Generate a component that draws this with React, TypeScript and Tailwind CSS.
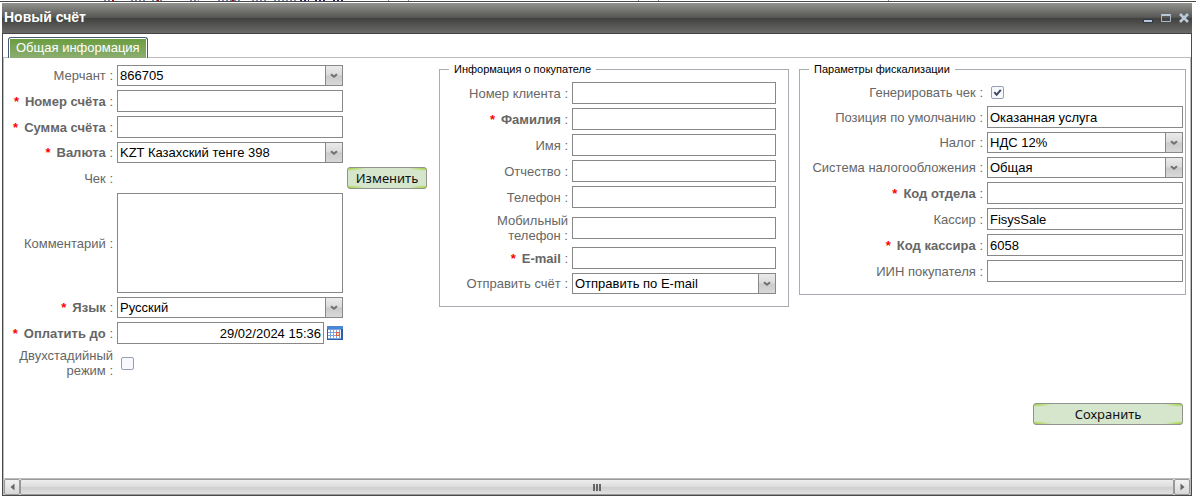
import type { ComponentPropsWithoutRef, ReactNode } from "react";

function Row({
  id,
  label,
  required,
  labelClass = "w-[109px]",
  className = "",
  children,
}: {
  id: string;
  label: string;
  required?: boolean;
  labelClass?: string;
  className?: string;
  children?: ReactNode;
}) {
  return (
    <div className={`flex items-center gap-1 ${className}`}>
      <label
        htmlFor={id}
        className={`shrink-0 text-right leading-[15px] text-[#666] ${labelClass}`}
      >
        {required ? (
          <>
            <span className="mr-1.5 font-bold text-[#f00]">*</span>
            <span className="font-bold">{label}</span> :
          </>
        ) : (
          `${label} :`
        )}
      </label>
      {children}
    </div>
  );
}

function TextField({
  className = "",
  ...props
}: ComponentPropsWithoutRef<"input">) {
  return (
    <input
      type="text"
      className={`h-[22px] min-w-0 flex-1 border border-[#888] bg-white px-0.5 text-black outline-none ${className}`}
      {...props}
    />
  );
}

function SelectField({ id, options }: { id: string; options: string[] }) {
  return (
    <div className="relative h-[21px] min-w-0 flex-1">
      <select
        id={id}
        className="block h-full w-full appearance-none border border-[#888] bg-white pr-5 pl-0.5 text-black outline-none"
      >
        {options.map((option) => (
          <option key={option}>{option}</option>
        ))}
      </select>
      <span className="pointer-events-none absolute inset-y-0 right-0 flex w-[18px] items-center justify-center border border-[#888] bg-[linear-gradient(#ebebeb,#dadada_48%,#cacaca_52%,#d8d8d8)]">
        <svg width="8" height="6" viewBox="0 0 8 6" fill="none">
          <path d="M1 1.2 4 3.8 7 1.2" stroke="#707070" strokeWidth="2" />
        </svg>
      </span>
    </div>
  );
}

function Checkbox({ id, checked }: { id: string; checked?: boolean }) {
  return (
    <span className="relative ml-1 flex size-[13px]">
      <input
        id={id}
        type="checkbox"
        defaultChecked={checked}
        className="peer size-[13px] appearance-none rounded-[2px] border border-[#95a0b4] bg-[#f8f9fd]"
      />
      <svg
        viewBox="0 0 13 13"
        fill="none"
        className="pointer-events-none absolute inset-0 hidden size-[13px] peer-checked:block"
      >
        <path d="M3.3 6.2 5.6 8.8 9.8 3.8" stroke="#3a4760" strokeWidth="2" />
      </svg>
    </span>
  );
}

function GreenButton({
  className = "",
  children,
  ...props
}: ComponentPropsWithoutRef<"button">) {
  return (
    <button
      type="button"
      className={`h-[22px] rounded-[3px] border border-[#8f948c] bg-[#d5e6cd] bg-[radial-gradient(18px_3px_at_0_0,#9fd02e,transparent),radial-gradient(18px_3px_at_100%_0,#9fd02e,transparent),radial-gradient(18px_3px_at_0_100%,#9fd02e,transparent),radial-gradient(18px_3px_at_100%_100%,#9fd02e,transparent)] font-['Noto_Sans',sans-serif] text-[13px] leading-5 text-[#111] ${className}`}
      {...props}
    >
      {children}
    </button>
  );
}

function Group({ title, children }: { title: string; children: ReactNode }) {
  return (
    <fieldset className="min-w-0 self-start border border-[#a9abb3] pt-1.5 pb-3">
      <legend className="ml-[9px] px-[5px] text-[11px] leading-[14px] text-black">
        {title}
      </legend>
      <div className="flex flex-col gap-1">{children}</div>
    </fieldset>
  );
}

function CalendarIcon() {
  return (
    <svg width="16" height="14" viewBox="0 0 16 14" shapeRendering="crispEdges">
      <rect width="16" height="14" fill="#2c5fa8" />
      <rect width="16" height="3" fill="#4a86d4" />
      <rect x="1" y="3" width="13" height="10" fill="#7fa6dc" />
      {[4, 7, 10].map((y) =>
        [1, 4, 7, 10].map((x) => (
          <rect key={`${x}-${y}`} x={x} y={y} width="2" height="2" fill="#fff" />
        )),
      )}
      <rect x="13" y="4" width="1" height="8" fill="#e8f0fa" />
      <rect x="9" y="6" width="4" height="4" fill="#e2603f" />
      <rect x="10" y="7" width="2" height="2" fill="#fbd9cc" />
    </svg>
  );
}

function TitleBar() {
  return (
    <header className="flex h-[31px] items-center justify-between border-b border-[#444] bg-[linear-gradient(#92938f,#575755_48%,#41413f_52%,#6a6a68)] pr-[3px] pl-0.5">
      <h1 className="pb-0.5 text-sm font-bold text-white">Новый счёт</h1>
      <div className="flex gap-2">
        <button type="button" aria-label="Свернуть">
          <svg width="10" height="10" viewBox="0 0 10 10" className="block">
            <path d="M0 8h10" stroke="#2d3a4a" strokeWidth="4" />
            <path d="M1 8h8" stroke="#b9c8d8" strokeWidth="2" />
          </svg>
        </button>
        <button type="button" aria-label="Развернуть">
          <svg width="10" height="10" viewBox="0 0 10 10" className="block">
            <path d="M0 2h10" stroke="#b9c8d8" strokeWidth="2" />
            <path d="M.5 1v7.5h9V1" fill="none" stroke="#a9b9cb" />
          </svg>
        </button>
        <button type="button" aria-label="Закрыть">
          <svg width="10" height="10" viewBox="0 0 10 10" className="block">
            <path d="m1 1 8 8M9 1 1 9" stroke="#bccbdb" strokeWidth="2.6" />
          </svg>
        </button>
      </div>
    </header>
  );
}

function ScrollBar() {
  const arrow =
    "flex w-4 items-center justify-center rounded-[2px] border border-[#999] bg-linear-to-b from-[#f2f2f2] to-[#d8d8d8]";
  return (
    <div className="flex h-[17px] border-t border-[#bbb] bg-[#ddd]">
      <button type="button" aria-label="Влево" className={arrow}>
        <svg width="5" height="8" viewBox="0 0 5 8">
          <path d="M4.5.5v7L.5 4z" fill="#666" />
        </svg>
      </button>
      <div className="flex flex-1 items-center justify-center gap-px rounded-[2px] border border-[#999] bg-[linear-gradient(#eee,#ddd_48%,#cfcfcf_52%,#e0e0e0)]">
        <span className="h-[7px] w-0.5 bg-[#666]" />
        <span className="h-[7px] w-0.5 bg-[#666]" />
        <span className="h-[7px] w-0.5 bg-[#666]" />
      </div>
      <button type="button" aria-label="Вправо" className={arrow}>
        <svg width="5" height="8" viewBox="0 0 5 8">
          <path d="M.5.5v7l4-3.5z" fill="#666" />
        </svg>
      </button>
    </div>
  );
}

// the sliver of the page that shows above the window
function PageEdge() {
  return (
    <div className="h-0.5 border-b border-[#4a4a4a]">
      <svg width="900" height="1" className="block" shapeRendering="crispEdges">
        <path d="M104 .5h12M131 .5h14M152 .5h12M190 .5h9M218 .5h23M252 .5h14M274 .5h24" stroke="#7b86a8" strokeDasharray="2 2" />
        <path d="M112 .5h2M157 .5h2M232 .5h2" stroke="#c00" />
        <path d="M300 .5h9M315 .5h12M333 .5h12" stroke="#226" strokeDasharray="2 2" />
        <path d="M388 .5h1M408 .5h1M638 .5h1M658 .5h1M888 .5h1" stroke="#888" />
      </svg>
    </div>
  );
}

const buyerLabel = "w-[128px]";
const fiscalLabel = "w-[183px]";

export default function App() {
  return (
    <div className="flex min-h-screen flex-col bg-white pb-[3px] font-['Liberation_Sans',Arial,sans-serif] text-[13px]">
      <PageEdge />
      <main className="mt-px mr-1 ml-0.5 flex flex-1 flex-col">
        <TitleBar />
        <div className="flex flex-1 flex-col border border-t-0 border-[#4a4a4a]">
          <div role="tablist" className="flex pt-[3px] pl-[5px]">
            <button
              type="button"
              role="tab"
              aria-selected="true"
              className="z-10 -mb-px h-[21px] rounded-t-[3px] border border-b-0 border-[#4a5878] bg-white px-px pt-px"
            >
              <span className="block h-full bg-linear-to-b from-[#6b9d3f] to-[#8cad70] px-1.5 leading-[18px] text-white">
                Общая информация
              </span>
            </button>
          </div>
          <form className="flex flex-1 flex-col border-x border-t border-[#bbb]">
            <div className="grid grid-cols-[435fr_350fr_10px_387fr] pt-1 pr-1">
              <div className="flex flex-col gap-1 pt-[3px] pr-3">
                <Row id="merchant" label="Мерчант" className="pr-[84px]">
                  <SelectField id="merchant" options={["866705"]} />
                </Row>
                <Row id="number" label="Номер счёта" required className="pr-[84px]">
                  <TextField id="number" />
                </Row>
                <Row id="amount" label="Сумма счёта" required className="pr-[84px]">
                  <TextField id="amount" />
                </Row>
                <Row id="currency" label="Валюта" required className="pr-[84px]">
                  <SelectField id="currency" options={["KZT Казахский тенге 398"]} />
                </Row>
                <Row id="receipt" label="Чек" className="justify-between">
                  <GreenButton id="receipt" className="w-20">
                    Изменить
                  </GreenButton>
                </Row>
                <Row id="comment" label="Комментарий" className="pr-[84px]">
                  <textarea
                    id="comment"
                    className="h-[100px] min-w-0 flex-1 resize-none border border-[#888] px-0.5 outline-none"
                  />
                </Row>
                <Row id="language" label="Язык" required className="pr-[84px]">
                  <SelectField id="language" options={["Русский"]} />
                </Row>
                <Row id="due" label="Оплатить до" required className="pr-[84px]">
                  <div className="flex min-w-0 flex-1 items-center gap-[3px]">
                    <TextField
                      id="due"
                      className="text-right"
                      defaultValue="29/02/2024 15:36"
                    />
                    <button type="button" aria-label="Выбрать дату">
                      <CalendarIcon />
                    </button>
                  </div>
                </Row>
                <Row id="two-stage" label="Двухстадийный режим">
                  <Checkbox id="two-stage" />
                </Row>
              </div>

              <Group title="Информация о покупателе">
                <div className="flex flex-col gap-1 pr-3">
                  <Row id="client" label="Номер клиента" labelClass={buyerLabel}>
                    <TextField id="client" />
                  </Row>
                  <Row id="surname" label="Фамилия" required labelClass={buyerLabel}>
                    <TextField id="surname" />
                  </Row>
                  <Row id="name" label="Имя" labelClass={buyerLabel}>
                    <TextField id="name" />
                  </Row>
                  <Row id="patronymic" label="Отчество" labelClass={buyerLabel}>
                    <TextField id="patronymic" />
                  </Row>
                  <Row id="phone" label="Телефон" labelClass={buyerLabel}>
                    <TextField id="phone" />
                  </Row>
                  <Row
                    id="mobile"
                    label="Мобильный телефон"
                    labelClass="w-[128px] pl-6"
                    className="h-[31px]"
                  >
                    <TextField id="mobile" />
                  </Row>
                  <Row id="email" label="E-mail" required labelClass={buyerLabel}>
                    <TextField id="email" />
                  </Row>
                  <Row id="send" label="Отправить счёт" labelClass={buyerLabel}>
                    <SelectField id="send" options={["Отправить по E-mail"]} />
                  </Row>
                </div>
              </Group>

              <div />

              <Group title="Параметры фискализации">
                <div className="flex flex-col gap-1 pr-0.5">
                  <Row
                    id="generate"
                    label="Генерировать чек"
                    labelClass={fiscalLabel}
                    className="h-5"
                  >
                    <Checkbox id="generate" checked />
                  </Row>
                  <Row id="position" label="Позиция по умолчанию" labelClass={fiscalLabel}>
                    <TextField id="position" defaultValue="Оказанная услуга" />
                  </Row>
                  <Row id="tax" label="Налог" labelClass={fiscalLabel}>
                    <SelectField id="tax" options={["НДС 12%"]} />
                  </Row>
                  <Row id="tax-system" label="Система налогообложения" labelClass={fiscalLabel}>
                    <SelectField id="tax-system" options={["Общая"]} />
                  </Row>
                  <Row id="department" label="Код отдела" required labelClass={fiscalLabel}>
                    <TextField id="department" />
                  </Row>
                  <Row id="cashier" label="Кассир" labelClass={fiscalLabel}>
                    <TextField id="cashier" defaultValue="FisysSale" />
                  </Row>
                  <Row id="cashier-code" label="Код кассира" required labelClass={fiscalLabel}>
                    <TextField id="cashier-code" defaultValue="6058" />
                  </Row>
                  <Row id="iin" label="ИИН покупателя" labelClass={fiscalLabel}>
                    <TextField id="iin" />
                  </Row>
                </div>
              </Group>
            </div>
            <div className="flex justify-end pt-[25px] pr-[7px]">
              <GreenButton className="w-[150px]">Сохранить</GreenButton>
            </div>
            <div className="flex-1" />
            <ScrollBar />
          </form>
        </div>
      </main>
    </div>
  );
}
